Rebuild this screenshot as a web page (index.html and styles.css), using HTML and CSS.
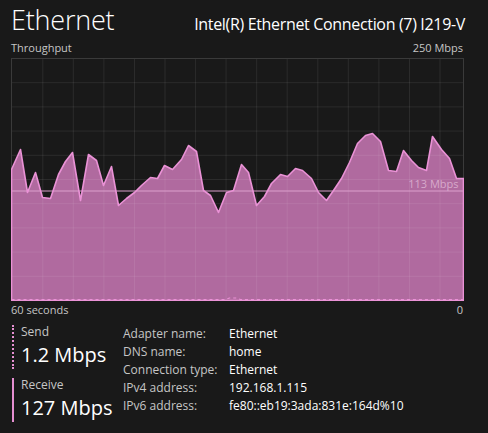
FILE: index.html
```html
<!DOCTYPE html>
<html>
<head>
<meta charset="utf-8">
<link rel="stylesheet" href="styles.css">
</head>
<body>
<div class="page">
  <header class="header">
    <h1 class="title">Ethernet</h1>
    <div class="device">Intel(R) Ethernet Connection (7) I219-V</div>
  </header>
  <div class="axis axis-top">
    <span>Throughput</span>
    <span>250 Mbps</span>
  </div>
  <svg class="graph" width="453" height="243" viewBox="10.5 57.5 453 243" xmlns="http://www.w3.org/2000/svg">
    <rect x="11" y="58" width="452" height="242" fill="#191919"/>
    <polygon class="recv-fill" points="11,300 11,169 20,149 27,192 35,172 42,197 50,198 58,174 65,161 72,152 80,200 88,154 96,160 103,185 111,166 118,205 126,198 134,192 141,185 150,177 157,178 164,165 172,169 181,159 188,145 196,151 203,190 210,195 218,212 226,192 233,190 241,164 248,172 256,205 264,196 271,183 280,174 287,176 295,168 302,170 311,178 318,192 326,200 333,190 341,178 349,162 357,143 365,135 372,133 380,141 388,170 396,171 403,150 411,160 418,167 426,170 432,136 441,149 449,158 456,178 463,178 463,300"/>
    <g class="grid">
      <line x1="42.3" y1="58" x2="42.3" y2="300"/>
      <line x1="72.8" y1="58" x2="72.8" y2="300"/>
      <line x1="103.4" y1="58" x2="103.4" y2="300"/>
      <line x1="134" y1="58" x2="134" y2="300"/>
      <line x1="164.5" y1="58" x2="164.5" y2="300"/>
      <line x1="195.1" y1="58" x2="195.1" y2="300"/>
      <line x1="225.6" y1="58" x2="225.6" y2="300"/>
      <line x1="256.2" y1="58" x2="256.2" y2="300"/>
      <line x1="286.7" y1="58" x2="286.7" y2="300"/>
      <line x1="317.3" y1="58" x2="317.3" y2="300"/>
      <line x1="347.8" y1="58" x2="347.8" y2="300"/>
      <line x1="378.4" y1="58" x2="378.4" y2="300"/>
      <line x1="409" y1="58" x2="409" y2="300"/>
      <line x1="439.5" y1="58" x2="439.5" y2="300"/>
      <line x1="11" y1="82.2" x2="463" y2="82.2"/>
      <line x1="11" y1="106.4" x2="463" y2="106.4"/>
      <line x1="11" y1="130.6" x2="463" y2="130.6"/>
      <line x1="11" y1="154.8" x2="463" y2="154.8"/>
      <line x1="11" y1="179" x2="463" y2="179"/>
      <line x1="11" y1="203.2" x2="463" y2="203.2"/>
      <line x1="11" y1="227.4" x2="463" y2="227.4"/>
      <line x1="11" y1="251.6" x2="463" y2="251.6"/>
      <line x1="11" y1="275.8" x2="463" y2="275.8"/>
    </g>
    <rect class="frame" x="11" y="58" width="452" height="242"/>
    <line class="avg" x1="11" y1="190.5" x2="463" y2="190.5"/>
    <text class="avg-label" x="458" y="187" text-anchor="end">113 Mbps</text>
    <polygon class="recv-line" points="11,300 11,169 20,149 27,192 35,172 42,197 50,198 58,174 65,161 72,152 80,200 88,154 96,160 103,185 111,166 118,205 126,198 134,192 141,185 150,177 157,178 164,165 172,169 181,159 188,145 196,151 203,190 210,195 218,212 226,192 233,190 241,164 248,172 256,205 264,196 271,183 280,174 287,176 295,168 302,170 311,178 318,192 326,200 333,190 341,178 349,162 357,143 365,135 372,133 380,141 388,170 396,171 403,150 411,160 418,167 426,170 432,136 441,149 449,158 456,178 463,178 463,300"/>
    <polyline class="send-line" points="11,299 225,299 229,297.5 236,297.5 240,299 463,299"/>
  </svg>
  <div class="axis axis-bottom">
    <span>60 seconds</span>
    <span>0</span>
  </div>
  <section class="stats">
    <div class="metrics">
      <div class="metric metric-send">
        <div class="metric-label">Send</div>
        <div class="metric-value">1.2 Mbps</div>
      </div>
      <div class="metric metric-recv">
        <div class="metric-label">Receive</div>
        <div class="metric-value">127 Mbps</div>
      </div>
    </div>
    <dl class="details">
      <dt>Adapter name:</dt><dd>Ethernet</dd>
      <dt>DNS name:</dt><dd>home</dd>
      <dt>Connection type:</dt><dd>Ethernet</dd>
      <dt>IPv4 address:</dt><dd>192.168.1.115</dd>
      <dt>IPv6 address:</dt><dd>fe80::eb19:3ada:831e:164d%10</dd>
    </dl>
  </section>
</div>
</body>
</html>
```

FILE: styles.css
```css
* { box-sizing: border-box; }
html, body {
  margin: 0;
  padding: 0;
  background: #191919;
}
body {
  font-family: "Open Sans", "Noto Sans", sans-serif;
  color: #ffffff;
  width: 488px;
  height: 433px;
  overflow: hidden;
}
.page {
  padding: 0 24px 0 11px;
}
.header {
  display: flex;
  justify-content: space-between;
  align-items: baseline;
  height: 40px;
}
.title {
  margin: 0;
  font-size: 27px;
  font-weight: 300;
  line-height: 40px;
  letter-spacing: -0.2px;
}
.device {
  font-size: 16px;
  font-weight: 400;
  letter-spacing: -0.33px;
  margin-right: -1px;
}
.axis {
  display: flex;
  justify-content: space-between;
  font-size: 11px;
  color: #c6c6c6;
  line-height: 14px;
}
.axis-top {
  height: 18px;
  padding-top: 1px;
  margin-right: 1px;
}
.axis-bottom {
  height: 20px;
  padding-top: 2px;
  margin-right: 1px;
}
.graph {
  display: block;
  margin-left: -0.5px;
}
.recv-fill {
  fill: #b06a9f;
}
.grid line {
  stroke: rgba(255, 255, 255, 0.08);
  stroke-width: 1;
}
.frame {
  fill: none;
  stroke: #3a3a3a;
  stroke-width: 1;
}
.avg {
  stroke: #dca0cd;
  stroke-width: 1;
}
.avg-label {
  font-family: "Open Sans", sans-serif;
  font-size: 11px;
  fill: #d7a9cb;
}
.recv-line {
  fill: none;
  stroke: #ea92d6;
  stroke-width: 1.6;
  stroke-linejoin: round;
}
.send-line {
  fill: none;
  stroke: #ea92d6;
  stroke-width: 1.2;
  stroke-dasharray: 3 3;
}
.stats {
  display: flex;
  margin-top: 4px;
}
.metrics {
  width: 112px;
  display: flex;
  flex-direction: column;
  gap: 9px;
}
.metric {
  padding-left: 7px;
  margin-left: 1px;
}
.metric-send {
  border-left: 2px dotted #e58fd1;
}
.metric-recv {
  border-left: 2px solid #e58fd1;
}
.metric-label {
  font-size: 12px;
  line-height: 14px;
  color: #c6c6c6;
}
.metric-value {
  font-size: 20px;
  line-height: 28px;
  margin-top: 2px;
}
.details {
  margin: 0;
  display: grid;
  grid-template-columns: 106px auto;
  grid-auto-rows: 18px;
  font-size: 12px;
  line-height: 18px;
  align-content: start;
}
.details dt {
  color: #c6c6c6;
}
.details dd {
  margin: 0;
  color: #ffffff;
}
```
